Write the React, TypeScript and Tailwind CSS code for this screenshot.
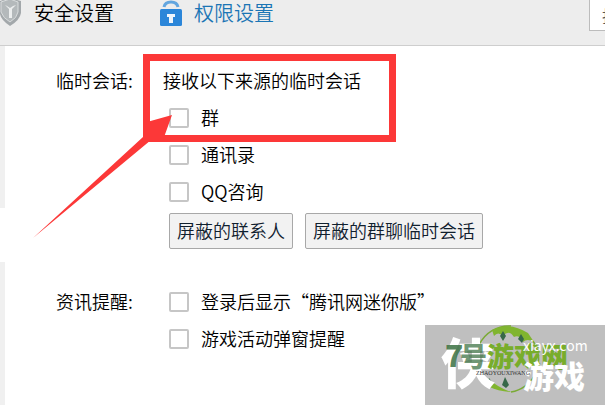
import type { ReactNode } from "react";

function Option({ id, children }: { id: string; children: ReactNode }) {
  return (
    <div className="flex h-[37px] items-center gap-3 pl-1.5">
      <input
        id={id}
        type="checkbox"
        className="size-5 shrink-0 appearance-none rounded-xs border-2 border-[#c6c6c6] bg-white checked:bg-[#2b86d9]"
      />
      <label htmlFor={id} className="pb-0.5 whitespace-nowrap">{children}</label>
    </div>
  );
}

function Section({ title, children }: { title: string; children: ReactNode }) {
  return (
    <section className="flex">
      <h2 className="flex h-[37px] w-[107px] shrink-0 items-center pb-0.5 font-[350] whitespace-nowrap">{title}</h2>
      <div className="min-w-0 flex-1">{children}</div>
    </section>
  );
}

function ShieldIcon() {
  return (
    <svg className="h-7 w-[22px] shrink-0" viewBox="0 0 22 28" aria-hidden="true">
      <path d="M0 1L9-2 21 1V13Q20 20 10 26 1 20 0 14Z" fill="#a3a8ab" />
      <path d="M1 2L10-1 18 2V12Q17 18 10 22 3 18 1 12Z" fill="#b4b9bb" stroke="#d9dcdd" />
      <path d="M5 5l4 4v9h3V9l4-4-3 1-3 2-3-2z" fill="#eceeee" />
    </svg>
  );
}

function LockIcon() {
  return (
    <svg className="h-7 w-[22px] shrink-0" viewBox="0 0 22 28" aria-hidden="true">
      <path d="M4 7Q5 2 11 2T18 7" fill="none" stroke="#63a6df" strokeWidth="3" />
      <rect y="9" width="22" height="17" rx="1.5" fill="#2b86d9" />
      <path d="M7 14h8v3h-2v6H9v-6H7z" fill="#eef5fc" />
    </svg>
  );
}

function Watermark() {
  return (
    <svg
      className="absolute right-0 bottom-0 h-20 w-[180px] bg-[#bfbfbf] font-['Noto_Sans_CJK_SC',sans-serif]"
      viewBox="0 0 180 80"
    >
      <path d="M54 20A33 33 0 0 1 86 1M108 16A33 33 0 0 1 86 67" fill="none" stroke="#7aaa35" strokeWidth="1.5" />
      <path d="M67 5Q84-4 103 8L109 17Q102 13 98 17 94 9 89 12 84 4 78 11 73 6 69 11Z" fill="#80b52f" />
      <path d="M54 52Q60 65 86 67 72 62 64 54Z" fill="#80b52f" />
      <path d="M78 6l3 5-3 5-3-5zM96 9l3 5-2 4-4-4zM80 52l4 8-3 3-4-3zM64 53l3 4-4 2z" fill="#376849" />
      <text x="16" y="59" fontSize="54" fontWeight="900" fill="#fff">侠</text>
      <text x="20" y="42" fontSize="30" fontWeight="900" fill="#417548" fillOpacity=".9">7</text>
      <text x="35" y="42" fontSize="27" fontWeight="900" fill="#417548" fillOpacity=".75">号</text>
      <text x="62" y="42" fontSize="27" fontWeight="900" fill="#78ad2b">游戏网</text>
      <text x="98" y="63" fontSize="31" fontWeight="900" fill="#fff">游戏</text>
      <text x="98" y="26" fontSize="14" fontWeight="400" fill="#fff">xiayx.com</text>
      <text x="51" y="50" fontSize="6" fontWeight="400" fill="#333" className="font-['Liberation_Serif',serif]">ZHAOYOUXIWANG</text>
    </svg>
  );
}

export default function App() {
  return (
    <div className="relative flex min-h-screen flex-col overflow-hidden bg-white font-['Noto_Sans_CJK_SC',sans-serif] text-lg/6 font-[350] text-black">
      <header className="flex h-[46px] items-start justify-between border-b border-[#cecece] bg-[#ededed]">
        <nav className="flex gap-[46px] text-xl/[26px]">
          <button className="flex items-start gap-3 whitespace-nowrap">
            <ShieldIcon />安全设置
          </button>
          <button className="flex items-start gap-3 whitespace-nowrap text-[#1b75b5]">
            <LockIcon />权限设置
          </button>
        </nav>
        <input
          aria-label="搜索"
          placeholder="找"
          className="h-[31px] w-4 border-b border-l border-[#bcbcbc] bg-white pl-3 text-base placeholder:text-[#555]"
        />
      </header>
      <div className="flex flex-1">
        <aside className="flex w-[5px] flex-col bg-[#f0f0f0]">
          <div className="mt-[162px] h-[54px] bg-white" />
        </aside>
        <main className="flex min-w-0 flex-1 flex-col gap-[34px] pt-4 pl-[51px]">
          <Section title="临时会话:">
            <p className="flex h-[37px] items-center pb-0.5 whitespace-nowrap">接收以下来源的临时会话</p>
            <Option id="group">群</Option>
            <Option id="contacts">通讯录</Option>
            <Option id="consult">QQ咨询</Option>
            <div className="mt-[3px] flex gap-3 pl-1.5 text-[#10202e]">
              <button className="h-9 rounded-xs border border-[#a8a8a8] bg-[#f2f2f2] px-[7px] pb-0.5 whitespace-nowrap">
                屏蔽的联系人
              </button>
              <button className="h-9 rounded-xs border border-[#a8a8a8] bg-[#f2f2f2] px-[7px] pb-0.5 whitespace-nowrap">
                屏蔽的群聊临时会话
              </button>
            </div>
          </Section>
          <Section title="资讯提醒:">
            <Option id="news">登录后显示“腾讯网迷你版”</Option>
            <Option id="games">游戏活动弹窗提醒</Option>
          </Section>
        </main>
      </div>
      <div className="pointer-events-none absolute top-[54px] left-[143px] h-[88px] w-[253px] border-7 border-[#fc3838]" />
      <svg className="pointer-events-none absolute top-[110px] left-8 h-[130px] w-[142px]" viewBox="0 0 142 130" aria-hidden="true">
        <path d="M1 128L111 27 115 12 140 5 131 30 119 30Z" fill="#fc3838" />
      </svg>
      <Watermark />
    </div>
  );
}
